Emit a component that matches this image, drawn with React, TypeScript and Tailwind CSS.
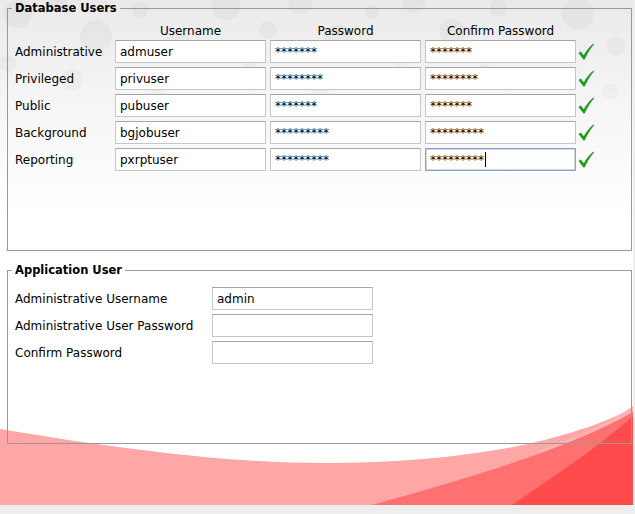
import type { ReactNode } from "react";

const dbUsers = [
  { role: "Administrative", user: "admuser", pass: "*******" },
  { role: "Privileged", user: "privuser", pass: "********" },
  { role: "Public", user: "pubuser", pass: "*******" },
  { role: "Background", user: "bgjobuser", pass: "*********" },
  { role: "Reporting", user: "pxrptuser", pass: "*********" },
];

const bubbles: [number, number, number][] = [
  [18, 14, 14], [58, 2, 10], [96, 36, 16], [140, 10, 8], [178, 44, 12], [226, 6, 14],
  [268, 30, 9], [300, 2, 12], [338, 40, 15], [372, 12, 7], [414, 2, 11], [452, 32, 13],
  [498, 8, 9], [540, 40, 12], [578, 14, 16], [616, 46, 10], [8, 64, 9], [72, 80, 11],
  [250, 70, 8], [486, 74, 10], [610, 92, 8], [156, 96, 7], [320, 88, 9], [400, 60, 6],
];

function Backdrop() {
  return (
    <svg className="absolute inset-0" width="633" height="505" viewBox="0 0 633 505">
      <defs>
        <linearGradient id="fade" x1="0" y1="0" x2="0" y2="1">
          <stop offset="0" stopColor="#eaeaea" />
          <stop offset="0.5" stopColor="#f6f6f6" />
          <stop offset="1" stopColor="#ffffff" />
        </linearGradient>
        <linearGradient id="bubbleFade" x1="0" y1="0" x2="0" y2="1">
          <stop offset="0" stopColor="#fff" stopOpacity="1" />
          <stop offset="1" stopColor="#fff" stopOpacity="0" />
        </linearGradient>
        <mask id="bubbleMask">
          <rect x="0" y="0" width="633" height="160" fill="url(#bubbleFade)" />
        </mask>
      </defs>
      <rect x="0" y="0" width="633" height="220" fill="url(#fade)" />
      <g mask="url(#bubbleMask)" fill="#dadada" fillOpacity="0.45">
        {bubbles.map(([cx, cy, r], i) => (
          <circle key={i} cx={cx} cy={cy} r={r} />
        ))}
      </g>
      <path d="M0 429 C150 454 250 464 336 463 C450 462 560 446 633 408 L633 505 L0 505 Z" fill="#ffa6a6" />
      <path d="M540 450 C580 436 610 422 633 406 L633 430 C610 440 580 452 540 462 Z" fill="#ffb3b3" />
      <path d="M372 505 C470 478 570 448 633 412 L633 505 Z" fill="#ff7070" />
      <path d="M512 505 C560 472 600 446 633 416 L633 505 Z" fill="#ff4b4b" />
    </svg>
  );
}

function Box({ children, focused, width }: { children?: ReactNode; focused?: boolean; width: string }) {
  return (
    <div
      className={`flex h-[23px] items-center bg-white pl-[4px] ${width} border ${
        focused
          ? "border-[#7fa4d3] shadow-[inset_0_0_0_1px_#d6d6d6]"
          : "border-[#c6c6c6] border-t-[#a6a6a6]"
      }`}
    >
      {children}
    </div>
  );
}

function Check() {
  return (
    <svg width="16" height="17" viewBox="0 0 16 17">
      <path
        d="M0.5 10 L2.8 8.6 L5.8 12.2 C8.4 7.8 11.6 3.6 15.4 0.6 L16 1.6 C12.6 5.2 9.6 10.2 6.6 16.6 L5.4 16.6 Z"
        fill="#1e9e1e"
      />
    </svg>
  );
}

export default function App() {
  return (
    <div className="relative h-[514px] w-[635px] overflow-hidden bg-[#eeeeee] font-['DejaVu_Sans','Liberation_Sans',sans-serif] text-[12px] text-black">
      <div className="relative h-[505px] w-[633px] overflow-hidden bg-white">
        <Backdrop />
        <div className="relative">
          <fieldset className="ml-[7px] h-[251px] w-[625px] border border-[#999999] pl-[7px] pt-[8px]">
            <legend className="-ml-[3px] px-[3px] text-[11.5px] font-bold leading-[16px]">Database Users</legend>
            <div className="flex h-[16px] gap-[4px] leading-[15px]">
              <div className="w-[96px]" />
              <div className="w-[151px] text-center">Username</div>
              <div className="w-[151px] text-center">Password</div>
              <div className="w-[151px] text-center">Confirm Password</div>
            </div>
            <div className="flex flex-col gap-[4px]">
              {dbUsers.map((u, i) => {
                const last = i === dbUsers.length - 1;
                return (
                  <div key={u.role} className="flex items-center gap-[4px]">
                    <div className="w-[96px]">{u.role}</div>
                    <Box width="w-[151px]">{u.user}</Box>
                    <Box width="w-[151px]">{u.pass}</Box>
                    <Box width="w-[151px]" focused={last}>
                      {u.pass}
                      {last && <span className="ml-[1px] h-[15px] w-px bg-black" />}
                    </Box>
                    <div className="-ml-[2px]">
                      <Check />
                    </div>
                  </div>
                );
              })}
            </div>
          </fieldset>

          <fieldset className="ml-[7px] mt-[11px] h-[182px] w-[625px] border border-[#999999] pl-[7px] pt-[9px]">
            <legend className="-ml-[3px] px-[3px] text-[11.5px] font-bold leading-[16px]">Application User</legend>
            <div className="flex flex-col gap-[4px]">
              {[
                ["Administrative Username", "admin"],
                ["Administrative User Password", ""],
                ["Confirm Password", ""],
              ].map(([label, value]) => (
                <div key={label} className="flex items-center">
                  <div className="w-[197px]">{label}</div>
                  <Box width="w-[161px]">{value}</Box>
                </div>
              ))}
            </div>
          </fieldset>
        </div>
      </div>
    </div>
  );
}
